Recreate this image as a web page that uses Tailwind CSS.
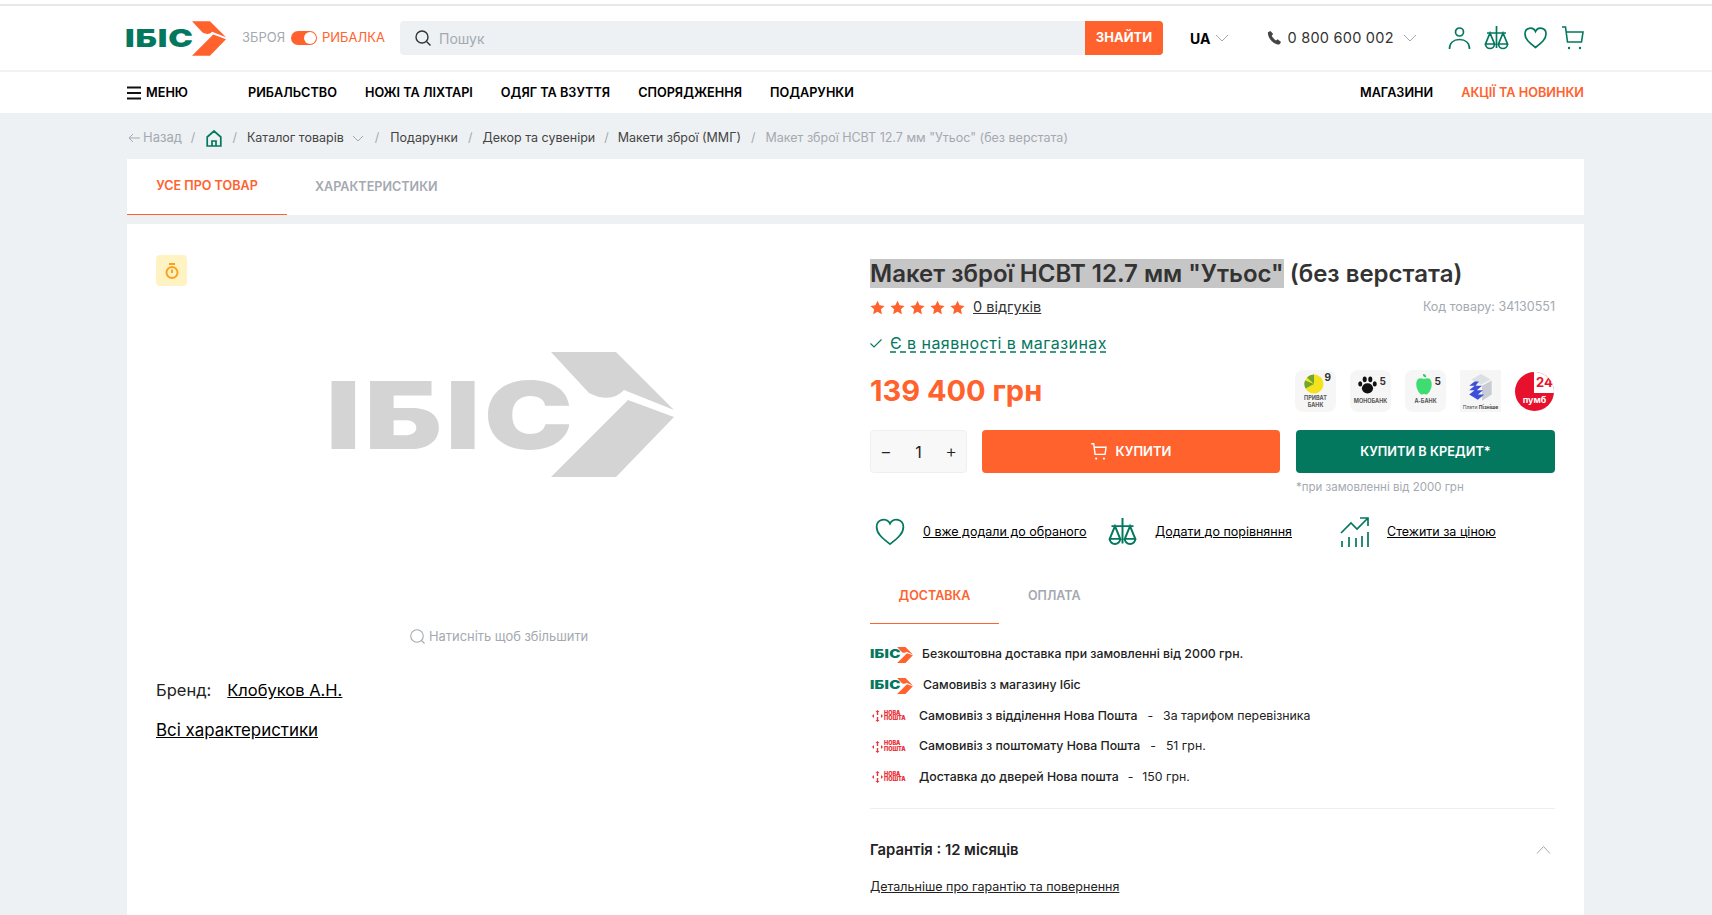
<!DOCTYPE html>
<html lang="uk">
<head>
  <meta charset="UTF-8" />
  <title>Макет зброї НСВТ 12.7 мм "Утьос" | Ібіс</title>
  <script src="https://cdn.jsdelivr.net/npm/@tailwindcss/browser@4"></script>
</head>
<body class="bg-[#eef1f3] text-[#222] font-['Inter','Noto_Sans',sans-serif] h-[915px] overflow-hidden">

  <!-- Header -->
  <div class="h-1 bg-white"></div>
  <header class="bg-white border-t-2 border-t-[#e8e8e8] border-b-2 border-b-[#f3f3f3] h-[68px]">
    <div class="w-[1457px] ml-[127px] h-full flex items-center">
      <a href="#" class="flex items-center w-[100px] shrink-0 h-[35px]">
        <span class="-ml-[2px] text-[25px] leading-none font-black tracking-[.7px] scale-x-[1.32] origin-left text-[#03785e] w-[67px] shrink-0">ІБІС</span>
        <svg class="w-[34px] h-[35px] shrink-0" viewBox="0 0 123 125" fill="#ff622d"><path d="M0 0H65L123 58 73 38Q60 52 38 41Z"/><path d="M77 48 123 65 65 125H0Z"/></svg>
      </a>
      <div class="flex items-center ml-[15px] w-[143px] text-[13px] shrink-0">
        <span class="text-[#a4a9b1] w-[49px]">ЗБРОЯ</span>
        <span class="relative w-[26px] h-[14px] rounded-full bg-[#ff622d] shrink-0">
          <span class="absolute right-[1px] top-[1px] w-3 h-3 rounded-full bg-white"></span>
        </span>
        <span class="text-[#ff622d] ml-[5px]">РИБАЛКА</span>
      </div>
      <div class="flex items-center ml-[15px] w-[763px] h-[34px] bg-[#eef1f3] rounded shrink-0">
        <svg class="w-[18px] h-[18px] ml-[14px]" viewBox="0 0 18 18" fill="none" stroke="#333" stroke-width="1.4"><circle cx="8" cy="8" r="6"/><path d="m12.5 12.5 4 4"/></svg>
        <span class="ml-[7px] text-[14px] text-[#a4a9b1]">Пошук</span>
        <button class="ml-auto w-[78px] h-full bg-[#ff622d] text-white text-[13px] font-bold rounded-r">ЗНАЙТИ</button>
      </div>
      <span class="ml-[27px] text-[14px] font-bold text-black">UA</span>
      <svg class="ml-[5px] w-[14px] h-[8px]" viewBox="0 0 14 8" fill="none" stroke="#a4a9b1"><path d="m1 1 6 6 6-6"/></svg>
      <svg class="ml-[37px] w-[16px] h-[16px]" viewBox="0 0 24 24" fill="#444"><path d="M6.6 1.5 3 3.2C1.5 11 12 23 20.5 21.5l2-3.6-5-3.9-2.6 1.800C12.5 14.5 9.5 11 8.6 8.3l2.2-2.3z"/></svg>
      <span class="ml-[5px] text-[14.5px] text-[#333] tracking-[.25px]">0 800 600 002</span>
      <svg class="ml-[9px] w-[14px] h-[8px]" viewBox="0 0 14 8" fill="none" stroke="#a4a9b1"><path d="m1 1 6 6 6-6"/></svg>
      <div class="ml-auto flex items-center text-[#03785e]">
        <svg class="w-[23px] h-[24px]" viewBox="0 0 23 24" fill="none" stroke="currentColor" stroke-width="1.7"><circle cx="11.5" cy="6" r="4"/><path d="M1.500 23c0-6 4-9.500 10-9.500s10 3.500 10 9.500"/></svg>
        <svg class="ml-[13px] w-[25px] h-[25px]" viewBox="0 0 25 25" fill="none" stroke="currentColor" stroke-width="1.7"><path d="M12.500 0v22M3 7h19M6 7 1.500 18h9zM19 7l-4.500 11h9zM1.500 18a4.500 4.500 0 0 0 9 0M14.500 18a4.500 4.500 0 0 0 9 0"/></svg>
        <svg class="ml-[15px] w-[23px] h-[22px]" viewBox="0 0 23 22" fill="none" stroke="currentColor" stroke-width="1.7"><path d="M11.500 20.500C5 15.500 1 12 1 7a5.500 5.500 0 0 1 10.500-2.500A5.500 5.500 0 0 1 22 7c0 5-4 8.500-10.500 13.500z"/></svg>
        <svg class="ml-[15px] w-[22px] h-[24px]" viewBox="0 0 22 24" fill="none" stroke="currentColor" stroke-width="1.6"><path d="M0 1h3.500l2 15h14L21 6H4"/><circle cx="7" cy="22" r="1.200" fill="currentColor" stroke="none"/><circle cx="18" cy="22" r="1.200" fill="currentColor" stroke="none"/></svg>
      </div>
    </div>
  </header>

  <!-- Nav -->
  <nav class="bg-white h-[41px]">
    <div class="w-[1457px] ml-[127px] h-full flex items-center pt-[1px] text-[12.7px] font-semibold text-black">
      <a href="#" class="flex items-center w-[121px] shrink-0">
        <svg class="w-[14px] h-[14px]" viewBox="0 0 14 14" stroke="#111" stroke-width="1.800"><path d="M0 1.500h14M0 7h14M0 12.500h14"/></svg>
        <span class="ml-[5px]">МЕНЮ</span>
      </a>
      <div class="flex gap-[28px]">
        <a href="#">РИБАЛЬСТВО</a>
        <a href="#">НОЖІ ТА ЛІХТАРІ</a>
        <a href="#">ОДЯГ ТА ВЗУТТЯ</a>
        <a href="#">СПОРЯДЖЕННЯ</a>
        <a href="#">ПОДАРУНКИ</a>
      </div>
      <div class="ml-auto flex gap-[28px]">
        <a href="#">МАГАЗИНИ</a>
        <a href="#" class="text-[#ff622d]">АКЦІЇ ТА НОВИНКИ</a>
      </div>
    </div>
  </nav>

  <main class="w-[1457px] ml-[127px]">
    <!-- Breadcrumbs -->
    <div class="h-[46px] pt-[4px] flex items-center text-[12.5px] text-[#444]">
      <svg class="w-[12px] h-[10px] ml-[1px]" viewBox="0 0 12 10" fill="none" stroke="#a4a9b1"><path d="M12 5H1m4-4L1 5l4 4"/></svg>
      <span class="ml-[3px] text-[13px] text-[#a4a9b1]">Назад</span>
      <span class="mx-[9px] text-[#a4a9b1]">/</span>
      <svg class="ml-[2px] w-[16px] h-[17px]" viewBox="0 0 16 17" fill="none" stroke="#03785e" stroke-width="1.700"><path d="M1.200 16V7L8 1l6.800 6v9zM6 16v-5h4v5"/></svg>
      <span class="mx-[10px] text-[#a4a9b1]">/</span>
      <span>Каталог товарів</span>
      <svg class="ml-[8px] w-[12px] h-[7px]" viewBox="0 0 12 7" fill="none" stroke="#a4a9b1"><path d="m1 1 5 5 5-5"/></svg>
      <span class="mx-[11px] text-[#a4a9b1]">/</span>
      <span>Подарунки</span>
      <span class="mx-[10px] text-[#a4a9b1]">/</span>
      <span>Декор та сувеніри</span>
      <span class="mx-[9px] text-[#a4a9b1]">/</span>
      <span>Макети зброї (ММГ)</span>
      <span class="mx-[10px] text-[#a4a9b1]">/</span>
      <span class="text-[#a4a9b1]">Макет зброї НСВТ 12.7 мм "Утьос" (без верстата)</span>
    </div>

    <!-- Top tabs -->
    <div class="bg-white h-[56px] flex text-[12.6px] font-semibold">
      <a href="#" class="w-[160px] flex items-center justify-center text-[#ff622d] border-b border-[#ff622d]">УСЕ ПРО ТОВАР</a>
      <a href="#" class="ml-[28px] flex items-center text-[#a4a9b1]">ХАРАКТЕРИСТИКИ</a>
    </div>

    <!-- Product card -->
    <section class="bg-white mt-[9px] h-[700px] pl-[29px] pt-[31px] flex">
      <div class="w-[714px] shrink-0">
        <div class="w-[31px] h-[31px] rounded bg-[#fff3c4] flex items-center justify-center">
          <svg class="w-[14px] h-[16px]" viewBox="0 0 14 16" fill="none" stroke="#ffa01c" stroke-width="2"><circle cx="7" cy="9.500" r="5.500"/><path d="M4 1h6M7 6.500V10"/></svg>
        </div>
        <div class="mt-[66px] ml-[170px] h-[125px] flex items-center">
          <span class="w-[225px] shrink-0 pt-[2px] text-[93px] leading-none font-black tracking-[3px] scale-x-[1.28] origin-left text-[#d4d4d4]">ІБІС</span>
          <svg class="w-[123px] h-[125px] shrink-0" viewBox="0 0 123 125" fill="#d4d4d4"><path d="M0 0H65L123 58 73 38Q60 52 38 41Z"/><path d="M77 48 123 65 65 125H0Z"/></svg>
        </div>
        <div class="mt-[150px] ml-[254px] flex items-center text-[12.9px] text-[#a4a9b1]">
          <svg class="w-[15px] h-[15px]" viewBox="0 0 15 15" fill="none" stroke="#a4a9b1" stroke-width="1.100"><circle cx="7" cy="7" r="6.300"/><path d="m11.500 11.500 3 3"/></svg>
          <span class="ml-[4px]">Натисніть щоб збільшити</span>
        </div>
        <p class="mt-[34px] text-[16.5px] leading-[20px] text-[#222]">Бренд:<a href="#" class="ml-[16px] underline text-black">Клобуков А.Н.</a></p>
        <p class="mt-[20px] text-[16.9px] leading-[20px]"><a href="#" class="underline text-black">Всі характеристики</a></p>
      </div>

      <div class="w-[685px] shrink-0">
        <h1 class="mt-[5px] text-[24px] leading-[28px] font-semibold text-[#333]"><span class="bg-[#c6c6c6]">Макет зброї НСВТ 12.7 мм "Утьос"</span> (без верстата)</h1>

        <div class="mt-[7px] h-[24px] flex items-center">
          <div class="flex gap-[5px] text-[#ff622d]">
            <svg class="w-[15px] h-[15px]" viewBox="0 0 20 20" fill="currentColor"><path d="m10 1 2.800 6.100 6.700.8-5 4.500 1.400 6.600L10 15.700 4.100 19l1.400-6.600-5-4.500 6.700-.8z"/></svg>
            <svg class="w-[15px] h-[15px]" viewBox="0 0 20 20" fill="currentColor"><path d="m10 1 2.800 6.100 6.700.8-5 4.500 1.400 6.600L10 15.700 4.100 19l1.400-6.600-5-4.500 6.700-.8z"/></svg>
            <svg class="w-[15px] h-[15px]" viewBox="0 0 20 20" fill="currentColor"><path d="m10 1 2.800 6.100 6.700.8-5 4.500 1.400 6.600L10 15.700 4.100 19l1.400-6.600-5-4.500 6.700-.8z"/></svg>
            <svg class="w-[15px] h-[15px]" viewBox="0 0 20 20" fill="currentColor"><path d="m10 1 2.800 6.100 6.700.8-5 4.500 1.400 6.600L10 15.700 4.100 19l1.400-6.600-5-4.500 6.700-.8z"/></svg>
            <svg class="w-[15px] h-[15px]" viewBox="0 0 20 20" fill="currentColor"><path d="m10 1 2.800 6.100 6.700.8-5 4.500 1.400 6.600L10 15.700 4.100 19l1.400-6.600-5-4.500 6.700-.8z"/></svg>
          </div>
          <a href="#" class="ml-[8px] text-[14.500px] text-[#333] underline">0 відгуків</a>
          <span class="ml-auto text-[12.500px] text-[#a4a9b1]">Код товару: 34130551</span>
        </div>

        <div class="mt-[12px] h-[24px] flex items-center text-[#03785e]">
          <svg class="w-[12px] h-[9px]" viewBox="0 0 12 9" fill="none" stroke="currentColor" stroke-width="1.100"><path d="m.5 4.500 3.500 3.500 7.500-7.500"/></svg>
          <a href="#" class="ml-[8px] text-[16px] tracking-[.45px] underline decoration-dashed underline-offset-3">Є в наявності в магазинах</a>
        </div>

        <div class="mt-[15px] h-[42px] flex items-center">
          <span class="text-[29px] font-bold text-[#ff622d]">139 400 грн</span>
          <div class="ml-auto flex items-center gap-[14px] pr-[1px]">
            <div class="relative w-[41px] h-[42px] rounded-lg bg-[#f6f6f6] flex flex-col items-center">
              <svg class="mt-[4px] mr-[4px] w-[20px] h-[20px]" viewBox="0 0 20 20"><circle cx="10" cy="10" r="9.500" fill="#f5e21f"/><path d="M10 10 1 6.500A9.500 9.500 0 0 0 1.500 14.500z" fill="#6ea533"/><path d="M10 10 3 3.500A9.500 9.500 0 0 1 10 .5z" fill="#6ea533"/></svg>
              <span class="absolute right-[5px] top-[2px] text-[10px] font-bold leading-none text-[#333]">9</span>
              <span class="mt-[1px] text-[5.500px] leading-[6.500px] font-bold text-center text-[#555]">ПРИВАТ<br>БАНК</span>
            </div>
            <div class="relative w-[41px] h-[42px] rounded-lg bg-[#f6f6f6] flex flex-col items-center">
              <svg class="mt-[6px] mr-[6px] w-[19px] h-[18px]" viewBox="0 0 17 16" fill="#111"><ellipse cx="8.500" cy="11" rx="5" ry="4.500"/><ellipse cx="2" cy="7" rx="1.800" ry="2.300"/><ellipse cx="6" cy="3" rx="1.800" ry="2.500"/><ellipse cx="11" cy="3" rx="1.800" ry="2.500"/><ellipse cx="15" cy="7" rx="1.800" ry="2.300"/></svg>
              <span class="absolute right-[5px] top-[6px] text-[10px] font-bold leading-none text-[#333]">5</span>
              <span class="mt-[4px] text-[5.500px] leading-[6px] font-bold text-[#555]">МОНОБАНК</span>
            </div>
            <div class="relative w-[41px] h-[42px] rounded-lg bg-[#f6f6f6] flex flex-col items-center">
              <svg class="mt-[4px] mr-[3px] w-[16px] h-[21px]" viewBox="0 0 14 19"><path d="M6 0c2 0 3 1 3 3-2 0-3-1-3-3z" fill="#2fc764"/><path d="M7 4.500c6-2.500 7 2 7 5 0 4-3 9-5 9-1 0-1-.5-2-.5s-1 .5-2 .5c-2 0-5-5-5-9 0-3 1-7.500 7-5z" fill="#3edc72"/></svg>
              <span class="absolute right-[5px] top-[6px] text-[10px] font-bold leading-none text-[#333]">5</span>
              <span class="mt-[3px] text-[5.500px] leading-[6px] font-bold text-[#555]">А-БАНК</span>
            </div>
            <div class="w-[41px] h-[42px] bg-[#f6f6f6] flex flex-col items-center">
              <svg class="mt-[3px] w-[28px] h-[30px]" viewBox="0 0 26 28"><path d="M4 6 13 1l9 5-9 5z" fill="#dcdfe4"/><path d="M14 12l9-5v13l-9 6z" fill="#c9cdd3"/><path d="M2 8h9l-3 4h6l-5 4h6l-5 4h6l-6 5-8-5 5-4H2l5-4H2l5-4z" fill="#3c4fd8"/></svg>
              <span class="mt-[1px] text-[5px] leading-[6px] text-[#444] whitespace-nowrap">Плати <b>Пізніше</b></span>
            </div>
            <div class="relative w-[39px] h-[39px] rounded-full bg-[#e8112d] overflow-hidden flex flex-col items-center">
              <span class="absolute right-0 top-0 w-[20px] h-[21px] bg-white pl-[2px] pt-[1px] text-[13px] leading-[19px] font-bold text-[#e8112d]">24</span>
              <span class="mt-[23px] text-[9px] leading-[10px] font-bold text-white">пумб</span>
            </div>
          </div>
        </div>

        <div class="mt-[18px] flex">
          <div class="w-[97px] h-[43px] bg-[#f8f8f8] border border-[#efefef] rounded-sm flex items-center justify-between px-[9px] text-[16px] text-[#222]">
            <span class="text-[18px] font-light">−</span><span>1</span><span class="text-[18px] font-light">+</span>
          </div>
          <button class="ml-[15px] w-[298px] h-[43px] bg-[#ff622d] rounded-sm text-white text-[13px] font-semibold flex items-center justify-center">
            <svg class="w-[16px] h-[17px] mr-[9px]" viewBox="0 0 22 24" fill="none" stroke="currentColor" stroke-width="2"><path d="M0 1h3.500l2 15h14L21 6H4"/><circle cx="7" cy="22" r="1.500" fill="currentColor" stroke="none"/><circle cx="18" cy="22" r="1.500" fill="currentColor" stroke="none"/></svg>
            КУПИТИ
          </button>
          <button class="ml-[16px] w-[259px] h-[43px] bg-[#03785e] rounded-sm text-white text-[12.750px] font-semibold">КУПИТИ В КРЕДИТ*</button>
        </div>
        <p class="mt-[6px] ml-[426px] text-[11.500px] leading-[16px] text-[#a4a9b1]">*при замовленні від 2000 грн</p>

        <div class="mt-[20px] h-[34px] flex items-center text-[12.500px] text-black">
          <svg class="ml-[5px] w-[30px] h-[28px] text-[#03785e]" viewBox="0 0 23 22" fill="none" stroke="currentColor" stroke-width="1.400"><path d="M11.500 20.500C5 15.500 1 12 1 7a5.500 5.500 0 0 1 10.500-2.500A5.500 5.500 0 0 1 22 7c0 5-4 8.500-10.500 13.500z"/></svg>
          <a href="#" class="ml-[18px] w-[185px] shrink-0 underline">0 вже додали до обраного</a>
          <svg class="w-[29px] h-[29px] text-[#03785e]" viewBox="0 0 25 25" fill="none" stroke="currentColor" stroke-width="1.700"><path d="M12.500 0v22M3 7h19M6 7 1.500 18h9zM19 7l-4.500 11h9zM1.500 18a4.500 4.500 0 0 0 9 0M14.500 18a4.500 4.500 0 0 0 9 0"/></svg>
          <a href="#" class="ml-[18px] w-[185px] shrink-0 underline">Додати до порівняння</a>
          <svg class="w-[30px] h-[30px] text-[#03785e]" viewBox="0 0 30 30" fill="none" stroke="currentColor" stroke-width="1.700"><path d="M1 16 11 6l6 6L28 1M20 1h8v8M2 24v6M9 20v10M16 21v9M22 19v11M28 15v15"/></svg>
          <a href="#" class="ml-[17px] underline">Стежити за ціною</a>
        </div>

        <!-- Delivery -->
        <div class="mt-[20px] h-[55px] flex text-[12.500px] font-semibold">
          <a href="#" class="w-[129px] flex items-center justify-center text-[#ff622d] border-b border-[#ff622d]">ДОСТАВКА</a>
          <a href="#" class="ml-[29px] flex items-center text-[#a4a9b1]">ОПЛАТА</a>
        </div>

        <ul class="mt-[15px] text-[12.300px] text-[#222]">
          <li class="h-[31px] flex items-center">
            <span class="flex items-center w-[52px] shrink-0"><span class="text-[11.500px] leading-none font-black tracking-[.2px] scale-x-[1.3] origin-left text-[#03785e] w-[27px] shrink-0">ІБІС</span><svg class="w-[16px] h-[16px]" viewBox="0 0 123 125" fill="#ff622d"><path d="M0 0H65L123 58 73 38Q60 52 38 41Z"/><path d="M77 48 123 65 65 125H0Z"/></svg></span>
            <span class="font-medium">Безкоштовна доставка при замовленні від 2000 грн.</span>
          </li>
          <li class="h-[31px] flex items-center">
            <span class="flex items-center w-[53px] shrink-0"><span class="text-[11.500px] leading-none font-black tracking-[.2px] scale-x-[1.3] origin-left text-[#03785e] w-[27px] shrink-0">ІБІС</span><svg class="w-[16px] h-[16px]" viewBox="0 0 123 125" fill="#ff622d"><path d="M0 0H65L123 58 73 38Q60 52 38 41Z"/><path d="M77 48 123 65 65 125H0Z"/></svg></span>
            <span class="font-medium">Самовивіз з магазину Ібіс</span>
          </li>
          <li class="h-[30px] flex items-center">
            <span class="flex items-center w-[49px] shrink-0 pl-[2px] text-[#e8323c]"><svg class="w-[11px] h-[12px]" viewBox="0 0 11 12" fill="currentColor"><path d="M5.500 0 7.500 2H6.200v3H4.800V2H3.500zM5.500 12l2-2H6.200V7H4.800v3H3.500zM0 6l2-2v4zM11 6 9 4v4z"/></svg><span class="ml-[1px] text-[5.500px] leading-[5.500px] font-black">НОВА<br>ПОШТА</span></span>
            <span class="font-medium">Самовивіз з відділення Нова Пошта</span><span class="mx-[10px]">-</span><span>За тарифом перевізника</span>
          </li>
          <li class="h-[31px] flex items-center">
            <span class="flex items-center w-[49px] shrink-0 pl-[2px] text-[#e8323c]"><svg class="w-[11px] h-[12px]" viewBox="0 0 11 12" fill="currentColor"><path d="M5.500 0 7.500 2H6.200v3H4.800V2H3.500zM5.500 12l2-2H6.200V7H4.800v3H3.500zM0 6l2-2v4zM11 6 9 4v4z"/></svg><span class="ml-[1px] text-[5.500px] leading-[5.500px] font-black">НОВА<br>ПОШТА</span></span>
            <span class="font-medium">Самовивіз з поштомату Нова Пошта</span><span class="mx-[10px]">-</span><span>51 грн.</span>
          </li>
          <li class="h-[30px] flex items-center">
            <span class="flex items-center w-[49px] shrink-0 pl-[2px] text-[#e8323c]"><svg class="w-[11px] h-[12px]" viewBox="0 0 11 12" fill="currentColor"><path d="M5.500 0 7.500 2H6.200v3H4.800V2H3.500zM5.500 12l2-2H6.200V7H4.800v3H3.500zM0 6l2-2v4zM11 6 9 4v4z"/></svg><span class="ml-[1px] text-[5.500px] leading-[5.500px] font-black">НОВА<br>ПОШТА</span></span>
            <span class="font-medium">Доставка до дверей Нова пошта</span><span class="mx-[9px]">-</span><span>150 грн.</span>
          </li>
        </ul>

        <div class="mt-[16px] border-t border-[#efefef]"></div>

        <div class="mt-[30px] h-[22px] flex items-center">
          <span class="text-[14.800px] font-semibold text-[#222]">Гарантія : 12 місяців</span>
          <svg class="ml-auto mr-[4px] w-[15px] h-[8px]" viewBox="0 0 15 8" fill="none" stroke="#a4a9b1"><path d="m1 7.500 6.500-7 6.500 7"/></svg>
        </div>
        <a href="#" class="block mt-[17px] text-[12.500px] text-[#222] underline">Детальніше про гарантію та повернення</a>
      </div>
    </section>
  </main>
</body>
</html>
